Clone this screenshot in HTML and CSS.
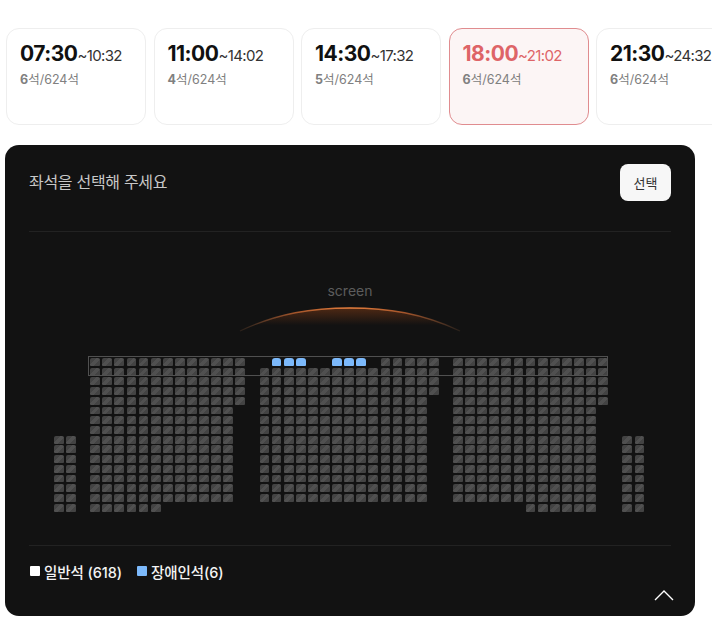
FILE: index.html
```html
<!DOCTYPE html>
<html lang="ko">
<head>
    <meta charset="UTF-8">
    <meta name="viewport" content="width=device-width, initial-scale=1.0">
    <title>좌석 선택</title>
    <link rel="stylesheet" href="styles.css">
</head>

<body>
    <!-- Showtimes -->
    <div class="times">
        <div class="time-card">
            <p class="time-card__time"><strong>07:30</strong>~10:32</p>
            <p class="time-card__seats"><b>6</b>석/624석</p>
        </div>
        <div class="time-card">
            <p class="time-card__time"><strong>11:00</strong>~14:02</p>
            <p class="time-card__seats"><b>4</b>석/624석</p>
        </div>
        <div class="time-card">
            <p class="time-card__time"><strong>14:30</strong>~17:32</p>
            <p class="time-card__seats"><b>5</b>석/624석</p>
        </div>
        <div class="time-card time-card--active">
            <p class="time-card__time"><strong>18:00</strong>~21:02</p>
            <p class="time-card__seats"><b>6</b>석/624석</p>
        </div>
        <div class="time-card">
            <p class="time-card__time"><strong>21:30</strong>~24:32</p>
            <p class="time-card__seats"><b>6</b>석/624석</p>
        </div>
    </div>

    <!-- Seat panel -->
    <section class="panel">
        <div class="panel__head">
            <h2 class="panel__title">좌석을 선택해 주세요</h2>
            <button class="panel__btn">선택</button>
        </div>

        <div class="screen">
            <span class="screen__label">screen</span>
            <svg class="screen__arc" width="224" height="28" viewBox="0 0 224 28">
                <defs>
                    <linearGradient id="arcLine" x1="0" x2="1" y1="0" y2="0">
                        <stop offset="0" stop-color="#8a5a3a" stop-opacity="0.2"/>
                        <stop offset="0.25" stop-color="#a3542a"/>
                        <stop offset="0.5" stop-color="#e8803e"/>
                        <stop offset="0.75" stop-color="#a3542a"/>
                        <stop offset="1" stop-color="#8a5a3a" stop-opacity="0.2"/>
                    </linearGradient>
                    <linearGradient id="arcGlow" x1="0" x2="0" y1="0" y2="1">
                        <stop offset="0" stop-color="#8a3f16" stop-opacity="0.5"/>
                        <stop offset="0.75" stop-color="#8a3f16" stop-opacity="0"/>
                    </linearGradient>
                </defs>
                <path d="M2 25 C40 7 75 2 112 2 C149 2 184 7 222 25Z" fill="url(#arcGlow)"/>
                <path d="M2 25 C40 7 75 2 112 2 C149 2 184 7 222 25" fill="none" stroke="url(#arcLine)" stroke-width="1.3"/>
            </svg>
        </div>

        <div class="seatmap">
            <div class="seatmap__frame"></div>
            <div class="seats" id="seats"></div>
        </div>

        <div class="panel__foot">
            <span class="legend"><i class="legend__box"></i>일반석 (618)</span>
            <span class="legend"><i class="legend__box legend__box--blue"></i>장애인석(6)</span>
            <svg class="panel__up" width="20" height="12" viewBox="0 0 20 12">
                <path d="M1 11 L10 2 L19 11" fill="none" stroke="#fff" stroke-width="1.4"/>
            </svg>
        </div>
    </section>

    <script src="seats.js"></script>
</body>
</html>
```

FILE: styles.css
```css
* {
    box-sizing: border-box;
    margin: 0;
    padding: 0;
}

body {
    background: #fff;
    font-family: 'Inter', 'Noto Sans CJK KR', sans-serif;
    overflow: hidden;
}

/* showtimes */
.times {
    display: flex;
    gap: 7.5px;
    width: 712px;
    padding: 28px 0 0 6px;
    overflow: hidden;
}

.time-card {
    flex: none;
    width: 140px;
    height: 97px;
    padding: 11px 13px;
    background: #fff;
    border: 1px solid #eeeeee;
    border-radius: 13px;
}

.time-card__time {
    font-size: 15px;
    line-height: 27px;
    color: #333;
    letter-spacing: -0.65px;
    white-space: nowrap;
}

.time-card__time strong {
    font-size: 21px;
    font-weight: 700;
    color: #111;
    letter-spacing: -0.5px;
}

.time-card__seats {
    margin-top: 2px;
    font-size: 12.5px;
    line-height: 18px;
    color: #808080;
}

.time-card--active {
    background: #fcf5f5;
    border-color: #e08c8f;
}

.time-card--active .time-card__time,
.time-card--active .time-card__time strong {
    color: #de6467;
}

/* seat panel */
.panel {
    width: 690px;
    height: 471px;
    margin: 20px 0 0 5px;
    padding: 0 24px;
    background: #121212;
    border-radius: 14px;
}

.panel__head {
    display: flex;
    justify-content: space-between;
    align-items: center;
    height: 87px;
    padding-bottom: 11px;
    border-bottom: 1px solid #222;
}

.panel__title {
    margin-bottom: 3px;
    font-size: 16px;
    font-weight: 400;
    letter-spacing: -0.3px;
    color: #c8c8c8;
}

.panel__btn {
    width: 51px;
    height: 37px;
    border: none;
    border-radius: 8px;
    background: #f7f7f7;
    color: #333;
    font-family: inherit;
    font-size: 13px;
}

.screen {
    display: flex;
    flex-direction: column;
    align-items: center;
    padding-top: 50px;
}

.screen__label {
    font-size: 14px;
    line-height: 17px;
    color: #5c5c5c;
}

.screen__arc {
    display: block;
    margin-top: 7px;
}

.seatmap {
    position: relative;
    margin: 24px 0 0 25px;
}

/* outline round the two front rows, lies over the seats */
.seatmap__frame {
    position: absolute;
    left: 34px;
    top: -2px;
    width: 520px;
    height: 20px;
    border: 1px solid #505050;
}

.seats {
    display: grid;
    grid-template-columns: repeat(49, 9.8px);
    grid-auto-rows: 7.8px;
    column-gap: 2.3px;
    row-gap: 1.93px;
}

.seat {
    border-radius: 2px 2px 1px 1px;
    background: linear-gradient(135deg, #434343 0 38%, #505050 38% 62%, #434343 62%);
}

.seat--blue {
    border-radius: 3px 3px 1px 1px;
    background: #7cb9fb;
}

.seat--empty {
    background: none;
}

.panel__foot {
    position: relative;
    display: flex;
    align-items: center;
    gap: 14px;
    height: 52px;
    margin-top: 33px;
    border-top: 1px solid #222;
}

.legend {
    display: flex;
    align-items: center;
    gap: 4px;
    font-size: 14.5px;
    font-weight: 500;
    letter-spacing: -0.1px;
    color: #f4f4f4;
}

.legend__box {
    width: 10px;
    height: 10px;
    margin-left: 1px;
    border-radius: 1px;
    background: #fff;
}

.legend__box--blue {
    background: #7cb9fb;
}

.panel__up {
    position: absolute;
    right: -3px;
    top: 43px;
}
```

FILE: seats.js
```js
// builds the 49 x 16 seat grid, row by row
const seatsEl = document.getElementById("seats");
const blueCols = [18, 19, 20, 23, 24, 25];

function seatType(row, col) {
    // side blocks
    if (col <= 1 || col >= 47) return row >= 8 ? "seat" : "";

    // left block
    if (col >= 3 && col <= 15) {
        if (row <= 4) return "seat";
        if (row == 15) return col <= 8 ? "seat" : "";
        return col <= 14 ? "seat" : "";
    }

    // centre block
    if (col >= 17 && col <= 31) {
        if (row == 0) {
            if (blueCols.includes(col)) return "seat seat--blue";
            return col >= 27 ? "seat" : "";
        }
        if (row == 15) return "";
        if (col == 31) return row <= 3 ? "seat" : "";
        return "seat";
    }

    // right block
    if (col >= 33 && col <= 45) {
        if (row <= 4) return "seat";
        if (row == 15) return col >= 39 && col <= 44 ? "seat" : "";
        return col <= 44 ? "seat" : "";
    }

    return "";
}

for (let row = 0; row < 16; row++) {
    for (let col = 0; col < 49; col++) {
        const cell = document.createElement("div");
        cell.className = seatType(row, col) || "seat seat--empty";
        seatsEl.appendChild(cell);
    }
}
```
